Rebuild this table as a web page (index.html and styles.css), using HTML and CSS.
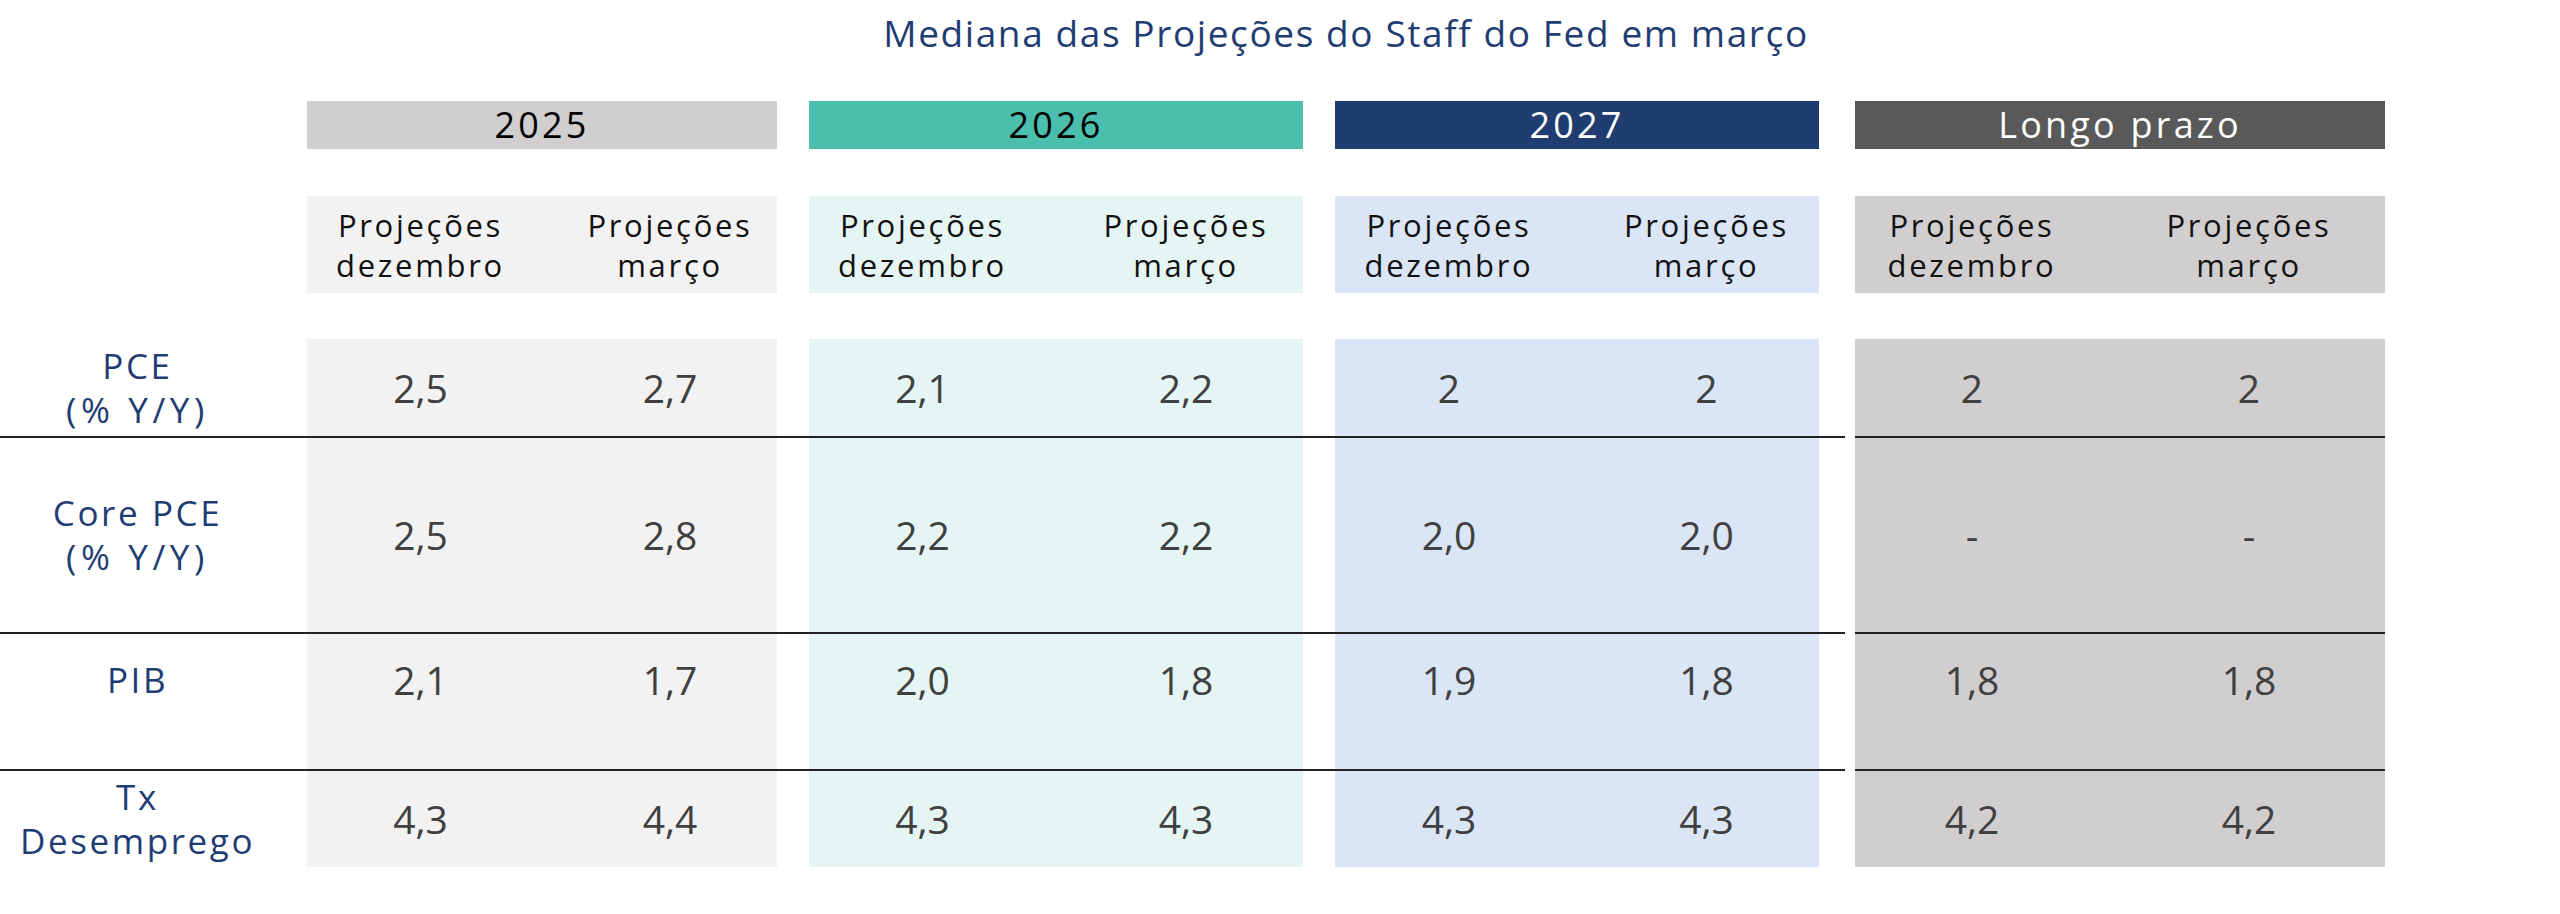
FILE: index.html
```html
<!DOCTYPE html>
<html lang="pt-BR">
<head>
<meta charset="utf-8">
<title>Mediana das Projeções do Staff do Fed em março</title>
<link rel="stylesheet" href="styles.css">
</head>
<body>
<div class="page">
  <h1 class="title">Mediana das Projeções do Staff do Fed em março</h1>

  <div class="row row-head">
    <div class="part-a">
      <div class="lbl"></div>
      <div class="grp c25">2025</div>
      <div class="grp c26">2026</div>
      <div class="grp c27">2027</div>
    </div>
    <div class="part-b">
      <div class="grp cl">Longo prazo</div>
    </div>
  </div>

  <div class="row row-sub">
    <div class="part-a">
      <div class="lbl"></div>
      <div class="grp c25"><div class="cell">Projeções<br>dezembro</div><div class="cell">Projeções<br>março</div></div>
      <div class="grp c26"><div class="cell">Projeções<br>dezembro</div><div class="cell">Projeções<br>março</div></div>
      <div class="grp c27"><div class="cell">Projeções<br>dezembro</div><div class="cell">Projeções<br>março</div></div>
    </div>
    <div class="part-b">
      <div class="grp cl"><div class="cell">Projeções<br>dezembro</div><div class="cell">Projeções<br>março</div></div>
    </div>
  </div>

  <div class="data">
    <div class="row row-data r1 ruled">
      <div class="part-a">
        <div class="lbl"><span>PCE</span><span class="pct">(% Y/Y)</span></div>
        <div class="grp c25"><div class="cell">2,5</div><div class="cell">2,7</div></div>
        <div class="grp c26"><div class="cell">2,1</div><div class="cell">2,2</div></div>
        <div class="grp c27"><div class="cell">2</div><div class="cell">2</div></div>
      </div>
      <div class="part-b">
        <div class="grp cl"><div class="cell">2</div><div class="cell">2</div></div>
      </div>
    </div>

    <div class="row row-data r2 ruled">
      <div class="part-a">
        <div class="lbl"><span>Core PCE</span><span class="pct">(% Y/Y)</span></div>
        <div class="grp c25"><div class="cell">2,5</div><div class="cell">2,8</div></div>
        <div class="grp c26"><div class="cell">2,2</div><div class="cell">2,2</div></div>
        <div class="grp c27"><div class="cell">2,0</div><div class="cell">2,0</div></div>
      </div>
      <div class="part-b">
        <div class="grp cl"><div class="cell">-</div><div class="cell">-</div></div>
      </div>
    </div>

    <div class="row row-data r3 ruled">
      <div class="part-a">
        <div class="lbl"><span>PIB</span></div>
        <div class="grp c25"><div class="cell">2,1</div><div class="cell">1,7</div></div>
        <div class="grp c26"><div class="cell">2,0</div><div class="cell">1,8</div></div>
        <div class="grp c27"><div class="cell">1,9</div><div class="cell">1,8</div></div>
      </div>
      <div class="part-b">
        <div class="grp cl"><div class="cell">1,8</div><div class="cell">1,8</div></div>
      </div>
    </div>

    <div class="row row-data r4">
      <div class="part-a">
        <div class="lbl"><span>Tx</span><span>Desemprego</span></div>
        <div class="grp c25"><div class="cell">4,3</div><div class="cell">4,4</div></div>
        <div class="grp c26"><div class="cell">4,3</div><div class="cell">4,3</div></div>
        <div class="grp c27"><div class="cell">4,3</div><div class="cell">4,3</div></div>
      </div>
      <div class="part-b">
        <div class="grp cl"><div class="cell">4,2</div><div class="cell">4,2</div></div>
      </div>
    </div>
  </div>
</div>
</body>
</html>
```

FILE: styles.css
```css
html, body {
  margin: 0;
  padding: 0;
  background: #ffffff;
}

.page {
  width: 2560px;
  font-family: "Open Sans", "Liberation Sans", sans-serif;
  color: #000;
}

.title {
  margin: 11px 0 46px 307px;
  width: 2078px;
  height: 44px;
  font-size: 37px;
  line-height: 44px;
  font-weight: 400;
  letter-spacing: 1.6px;
  text-align: center;
  color: #1f3d73;
}

.row {
  display: flex;
}

.part-a {
  box-sizing: border-box;
  width: 1845px;
  padding-right: 26px;
  display: grid;
  grid-template-columns: 275px 470px 494px 484px;
  column-gap: 32px;
}

.part-b {
  box-sizing: border-box;
  width: 530px;
  margin-left: 10px;
  display: grid;
  grid-template-columns: 530px;
}

.grp {
  display: flex;
  justify-content: space-between;
}

.c25 { --lw: 227px; --rw: 214px; }
.c26 { --lw: 227px; --rw: 234px; }
.c27 { --lw: 228px; --rw: 225px; }
.cl  { --lw: 234px; --rw: 272px; }

.cell {
  display: flex;
  align-items: center;
  justify-content: center;
  text-align: center;
}

.cell:first-child { width: var(--lw); }
.cell:last-child { width: var(--rw); }

/* year header row */
.row-head {
  height: 48px;
  margin-bottom: 47px;
}

.row-head .grp {
  justify-content: center;
  align-items: center;
  font-size: 36px;
  letter-spacing: 3.2px;
  line-height: 48px;
}

.row-head .c25 { background: #d0cece; color: #000; }
.row-head .c26 { background: #4bbfad; color: #000; }
.row-head .c27 { background: #1f3d70; color: #fff; }
.row-head .cl  { background: #595959; color: #fff; }

/* sub header row */
.row-sub {
  height: 97px;
  margin-bottom: 46px;
}

.row-sub .cell {
  font-size: 31px;
  line-height: 40px;
  letter-spacing: 2.7px;
  color: #111;
}

.c25 { background: #f2f2f2; }
.c26 { background: #e4f5f3; }
.c27 { background: #dae5f5; }
.cl  { background: #d0cece; }

/* data rows */
.row-data .cell {
  font-size: 39px;
  color: #404040;
  line-height: 44px;
}

.lbl {
  display: flex;
  flex-direction: column;
  align-items: center;
  justify-content: center;
  text-align: center;
  font-size: 35px;
  line-height: 44px;
  letter-spacing: 2.6px;
  color: #1f3d73;
  white-space: nowrap;
}

.pct {
  letter-spacing: 4.6px;
}

.ruled .part-a,
.ruled .part-b {
  border-bottom: 2px solid #222;
}

.r1 { height: 99px; }
.r2 { height: 196px; }
.r3 { height: 137px; }
.r4 { height: 96px; }

.r3 .cell,
.r3 .lbl {
  padding-bottom: 44px;
  box-sizing: border-box;
}
```
